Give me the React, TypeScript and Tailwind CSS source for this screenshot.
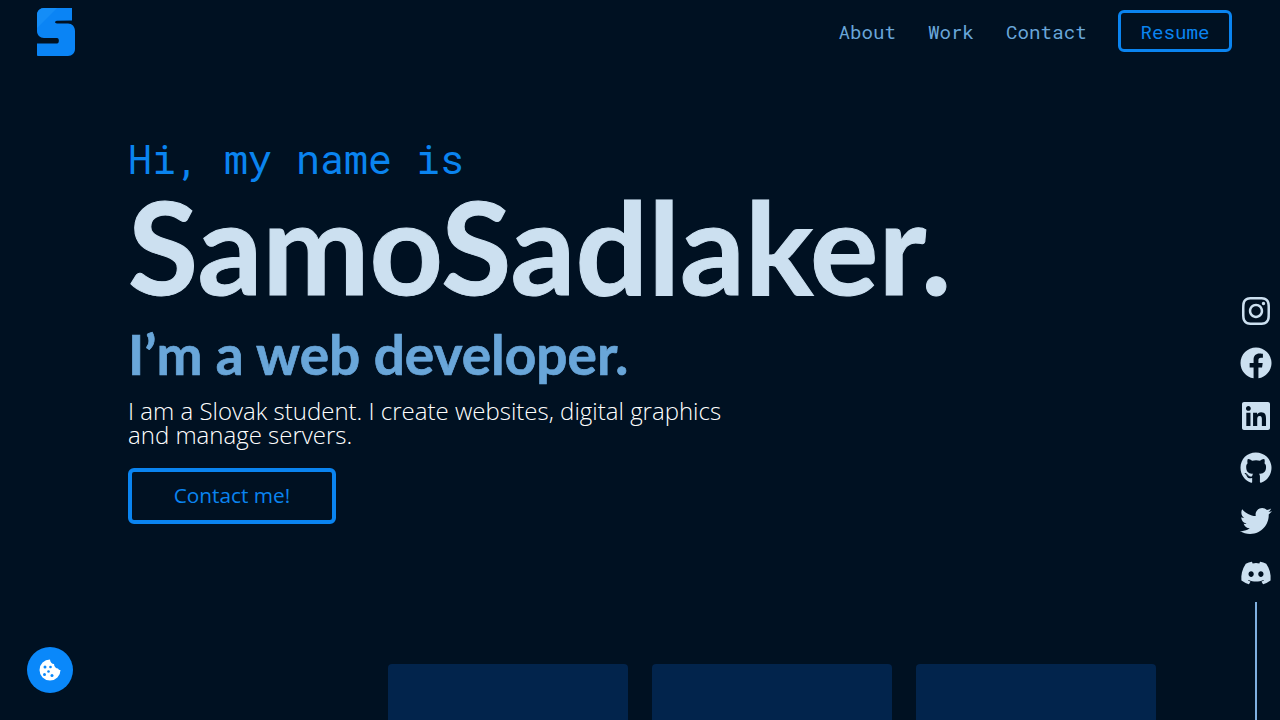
import { FaDiscord, FaFacebook, FaGithub, FaInstagram, FaLinkedin, FaTwitter } from "react-icons/fa";

const mono = "font-['Roboto_Mono','DejaVu_Sans_Mono','Liberation_Mono',monospace]";

function Logo() {
  return (
    <svg width="38" height="48" viewBox="0 0 38 48" className="block">
      <path
        d="M7 0H35V12.5L20 12.8C17.500 13 17.500 15.500 20 15.500H31C35 15.500 38 18.500 38 23V41C38 45 35 48 31 48H1C0.500 48 0 47.500 0 47V35.500H20C22.500 35.500 22.500 30 20 30H7C3 30 0 27 0 23V7C0 3 3 0 7 0Z"
        fill="#0a84f5"
      />
      <path d="M7 0H20L0 20V7C0 3 3 0 7 0Z" fill="#148df7" />
    </svg>
  );
}

function Cookie() {
  return (
    <svg width="22" height="22" viewBox="0 0 22 22" className="block">
      <path
        d="M11 .5C11 3 13 5 15 5C15 7.500 17 9.500 19 9.500C19.500 10.500 20.500 11 21.500 11A10.500 10.500 0 1 1 11 .5Z"
        fill="#ffffff"
      />
      <g fill="#0a88fa">
        <circle cx="6" cy="8" r="1.500" />
        <circle cx="11.500" cy="8" r="1.300" />
        <circle cx="9.500" cy="12.500" r="1.300" />
        <circle cx="5.500" cy="15.500" r="1.500" />
        <circle cx="13" cy="16.500" r="1.500" />
      </g>
    </svg>
  );
}

function Nav() {
  return (
    <nav className="flex items-center justify-between pl-[37px] pr-[48px] h-[62px]">
      <div className="mt-[2px]">
        <Logo />
      </div>
      <div className={`flex items-center gap-[32px] text-[19.2px] text-[#69a6d9] ${mono}`}>
        <a className="pt-[2px]">About</a>
        <a className="pt-[2px]">Work</a>
        <a className="pt-[2px] -mr-[0.7px]">Contact</a>
        <a className="flex items-center justify-center w-[114px] h-[42px] pt-[2px] border-[3px] border-[#0a84f0] rounded-[6px] text-[#0a84f0]">
          Resume
        </a>
      </div>
    </nav>
  );
}

function Hero() {
  return (
    <section className="pl-[128px] pt-[75px]">
      <p className={`text-[40px] leading-[44px] text-[#0a84f0] ${mono}`}>Hi, my name is</p>
      <h1 className="text-[128px] leading-[88px] font-bold text-[#cce0f0] mt-[21px] [-webkit-text-stroke:1px_#cce0f0] font-['Lato',sans-serif]">
        SamoSadlaker.
      </h1>
      <h2 className="text-[55px] leading-[56px] font-bold text-[#69a6d9] mt-[36px] [-webkit-text-stroke:0.7px_#69a6d9] font-['Lato',sans-serif]">
        I’m a web developer.
      </h2>
      <p className="text-[24px] leading-[24px] font-light text-white mt-[17px] max-w-[640px] font-['Open_Sans',sans-serif]">
        I am a Slovak student. I create websites, digital graphics and manage servers.
      </p>
      <button className="flex items-center justify-center w-[208px] h-[56px] mt-[21px] border-[4px] border-[#0a84f0] rounded-[6px] text-[20.8px] text-[#0a84f0] font-['Open_Sans',sans-serif]">
        Contact me!
      </button>
    </section>
  );
}

function Cards() {
  return (
    <div className="absolute top-[664px] left-[388px] flex gap-[24px]">
      {[0, 1, 2].map((i) => (
        <div key={i} className="w-[240px] h-[200px] bg-[#02244c] rounded-[4px]" />
      ))}
    </div>
  );
}

function Socials() {
  const icons = [FaInstagram, FaFacebook, FaLinkedin, FaGithub, FaTwitter, FaDiscord];
  return (
    <div className="absolute left-[1240px] top-[295px] w-[32px] flex flex-col items-center text-[#cce0f0]">
      <div className="flex flex-col items-center gap-[20.4px]">
        {icons.map((Icon, i) => (
          <Icon key={i} size={32} />
        ))}
      </div>
      <div className="w-[2px] h-[140px] bg-[#7fb0e0] mt-[13px]" />
    </div>
  );
}

export default function App() {
  return (
    <div className="relative w-full h-screen overflow-hidden bg-[#001122]">
      <Nav />
      <Hero />
      <Cards />
      <Socials />
      <button className="absolute left-[27px] top-[647px] w-[46px] h-[46px] rounded-full bg-[#0a88fa] flex items-center justify-center">
        <Cookie />
      </button>
    </div>
  );
}
